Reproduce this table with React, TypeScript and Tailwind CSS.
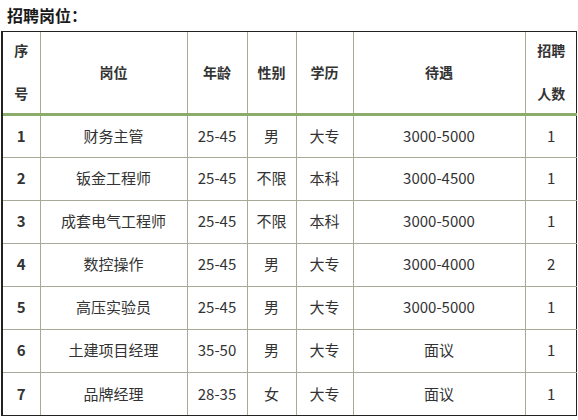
const ROWS = [
  { no: '1', job: '财务主管', age: '25-45', sex: '男', edu: '大专', pay: '3000-5000', num: '1' },
  { no: '2', job: '钣金工程师', age: '25-45', sex: '不限', edu: '本科', pay: '3000-4500', num: '1' },
  { no: '3', job: '成套电气工程师', age: '25-45', sex: '不限', edu: '本科', pay: '3000-5000', num: '1' },
  { no: '4', job: '数控操作', age: '25-45', sex: '男', edu: '大专', pay: '3000-4000', num: '2' },
  { no: '5', job: '高压实验员', age: '25-45', sex: '男', edu: '大专', pay: '3000-5000', num: '1' },
  { no: '6', job: '土建项目经理', age: '35-50', sex: '男', edu: '大专', pay: '面议', num: '1' },
  { no: '7', job: '品牌经理', age: '28-35', sex: '女', edu: '大专', pay: '面议', num: '1' },
];

const WIDTHS = [37, 147, 60, 49, 57, 172, 52];

const App = () => {
  return (
    <div className="w-[578px] h-[420px] bg-white overflow-hidden text-[#333]" style={{ fontFamily: '"Noto Sans CJK SC", "Noto Sans", sans-serif' }}>
      <div className="h-[31px] pl-[7px] pt-[4px] text-[16px] font-bold text-[#1a1a1a] leading-[22px]">招聘岗位：</div>
      <div className="ml-[1px] w-[576px] border border-[#222] border-l-2">
        <table className="w-full table-fixed border-collapse text-center">
          <colgroup>
            {WIDTHS.map((w, i) => <col key={i} style={{ width: w }} />)}
          </colgroup>
          <thead>
            <tr className="border-b-[3px] border-b-[#8aad6a]">
              <th className="h-[82px] p-0 border-r border-[#a4ab96] text-[14px] font-bold">
                <div className="flex flex-col items-center gap-[24px] leading-[19px]"><span>序</span><span>号</span></div>
              </th>
              <th className="border-r border-[#a4ab96] text-[14px] font-bold">岗位</th>
              <th className="border-r border-[#a4ab96] text-[14px] font-bold">年龄</th>
              <th className="border-r border-[#a4ab96] text-[14px] font-bold">性别</th>
              <th className="border-r border-[#a4ab96] text-[14px] font-bold">学历</th>
              <th className="border-r border-[#a4ab96] text-[14px] font-bold">待遇</th>
              <th className="p-0 text-[14px] font-bold">
                <div className="flex flex-col items-center gap-[24px] leading-[19px]"><span>招聘</span><span>人数</span></div>
              </th>
            </tr>
          </thead>
          <tbody>
            {ROWS.map((r, i) => (
              <tr key={r.no} className={i < ROWS.length - 1 ? 'border-b border-[#a4ab96]' : ''}>
                <td className="h-[43px] border-r border-[#a4ab96] text-[15px] font-bold">{r.no}</td>
                <td className="border-r border-[#a4ab96] text-[15px]">{r.job}</td>
                <td className="border-r border-[#a4ab96] text-[15px]">{r.age}</td>
                <td className="border-r border-[#a4ab96] text-[15px]">{r.sex}</td>
                <td className="border-r border-[#a4ab96] text-[15px]">{r.edu}</td>
                <td className="border-r border-[#a4ab96] text-[15px]">{r.pay}</td>
                <td className="text-[15px]">{r.num}</td>
              </tr>
            ))}
          </tbody>
        </table>
      </div>
    </div>
  );
};

export default App;
